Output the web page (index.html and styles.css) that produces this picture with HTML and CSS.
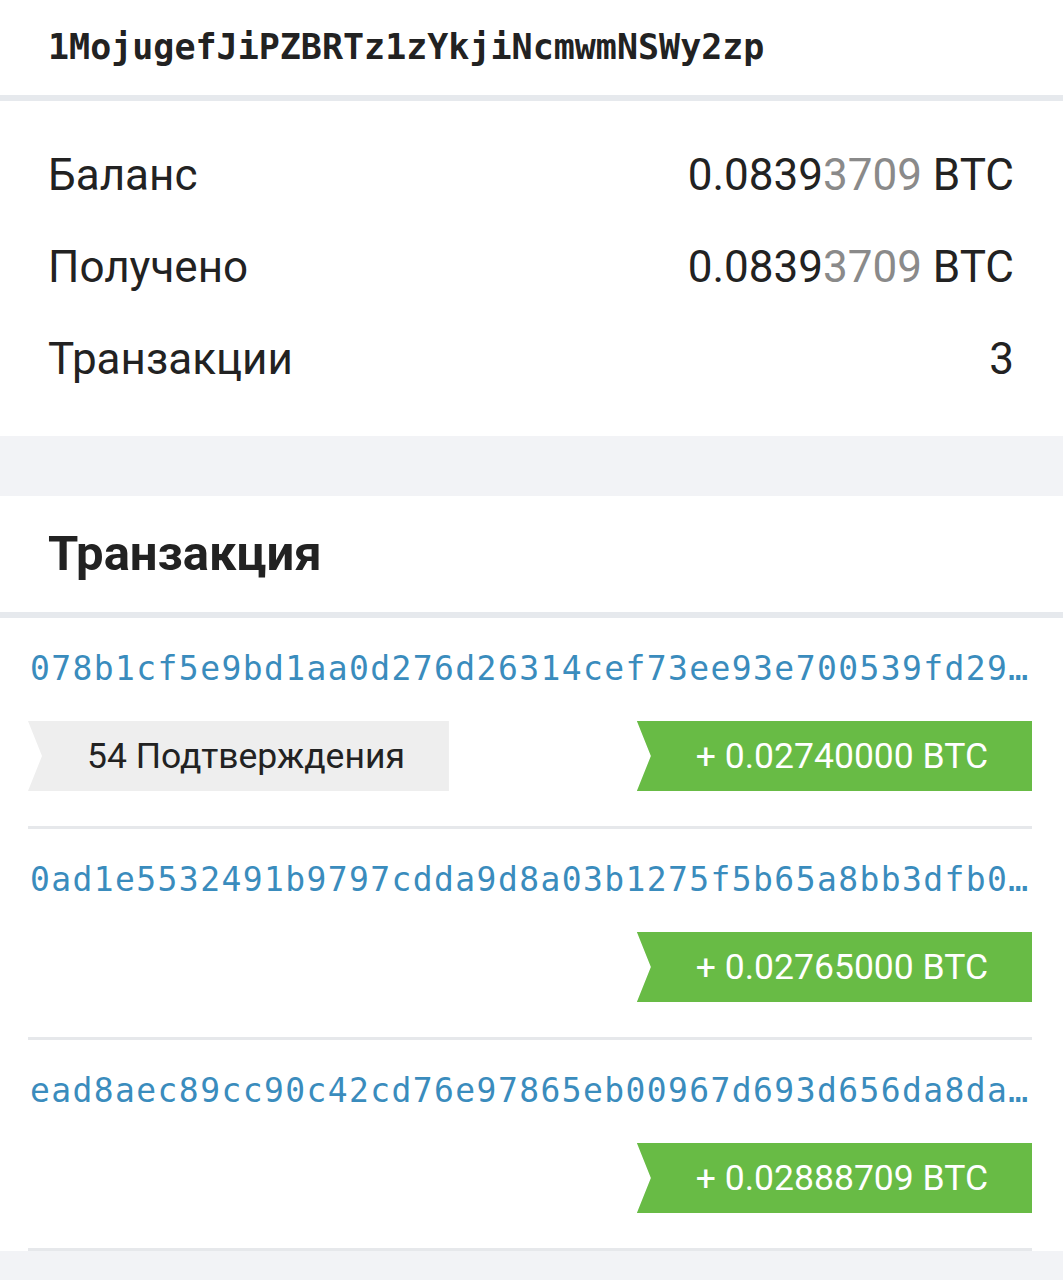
FILE: index.html
```html
<!DOCTYPE html>
<html lang="ru">
<head>
    <meta charset="UTF-8">
    <meta name="viewport" content="width=device-width, initial-scale=1.0">
    <title>Адрес</title>
    <link rel="stylesheet" href="styles.css">
</head>
<body>
    <div class="address-bar">1MojugefJiPZBRTz1zYkjiNcmwmNSWy2zp</div>

    <div class="summary">
        <div class="summary-row">
            <span class="label">Баланс</span>
            <span class="value">0.0839<span class="dim">3709</span> BTC</span>
        </div>
        <div class="summary-row">
            <span class="label">Получено</span>
            <span class="value">0.0839<span class="dim">3709</span> BTC</span>
        </div>
        <div class="summary-row">
            <span class="label">Транзакции</span>
            <span class="value">3</span>
        </div>
    </div>

    <div class="tx-card">
        <h2 class="tx-title">Транзакция</h2>
        <div class="tx-list">
            <div class="tx-item">
                <div class="tx-hash">078b1cf5e9bd1aa0d276d26314cef73ee93e700539fd29…</div>
                <div class="tx-badges">
                    <span class="badge badge-conf">54 Подтверждения</span>
                    <span class="badge badge-amount">+ 0.02740000 BTC</span>
                </div>
            </div>
            <div class="tx-item">
                <div class="tx-hash">0ad1e5532491b9797cdda9d8a03b1275f5b65a8bb3dfb0…</div>
                <div class="tx-badges">
                    <span class="badge badge-amount">+ 0.02765000 BTC</span>
                </div>
            </div>
            <div class="tx-item">
                <div class="tx-hash">ead8aec89cc90c42cd76e97865eb00967d693d656da8da…</div>
                <div class="tx-badges">
                    <span class="badge badge-amount">+ 0.02888709 BTC</span>
                </div>
            </div>
        </div>
    </div>
</body>
</html>
```

FILE: styles.css
```css
* {
    margin: 0;
    padding: 0;
    box-sizing: border-box;
}

body {
    font-family: Roboto, 'Liberation Sans', sans-serif;
    background: #f2f3f6;
    color: #222;
}

.address-bar {
    height: 101px;
    background: #fff;
    border-bottom: 6px solid #e6e9ed;
    padding-left: 48px;
    line-height: 95px;
    font-family: 'DejaVu Sans Mono', monospace;
    font-weight: bold;
    font-size: 35px;
    color: #222;
}

.summary {
    background: #fff;
    padding: 28px 49px 31px 48px;
}

.summary-row {
    display: flex;
    justify-content: space-between;
    align-items: center;
    height: 92px;
    font-size: 44px;
}

.summary-row .dim {
    color: #8a8a8a;
}

.tx-card {
    margin-top: 60px;
    background: #fff;
}

.tx-title {
    height: 122px;
    line-height: 116px;
    padding-left: 48px;
    border-bottom: 6px solid #e6e9ed;
    font-size: 49px;
    font-weight: bold;
    color: #222;
}

.tx-list {
    padding: 0 31px 0 28px;
}

.tx-item {
    padding: 26px 0 35px;
    border-bottom: 3px solid #e6e8eb;
}

.tx-hash {
    height: 50px;
    line-height: 50px;
    padding-left: 2px;
    font-family: 'DejaVu Sans Mono', monospace;
    font-size: 33px;
    letter-spacing: 1.4px;
    color: #3a8cbd;
    white-space: nowrap;
    overflow: hidden;
}

.tx-badges {
    display: flex;
    margin-top: 27px;
}

.badge {
    height: 70px;
    line-height: 70px;
    padding: 0 44px 0 59px;
    font-size: 35.5px;
    clip-path: polygon(0 0, 100% 0, 100% 100%, 0 100%, 14px 50%);
}

.badge-conf {
    background: #eeeeee;
    color: #222;
}

.badge-amount {
    margin-left: auto;
    background: #68bb45;
    color: #fff;
}
```
